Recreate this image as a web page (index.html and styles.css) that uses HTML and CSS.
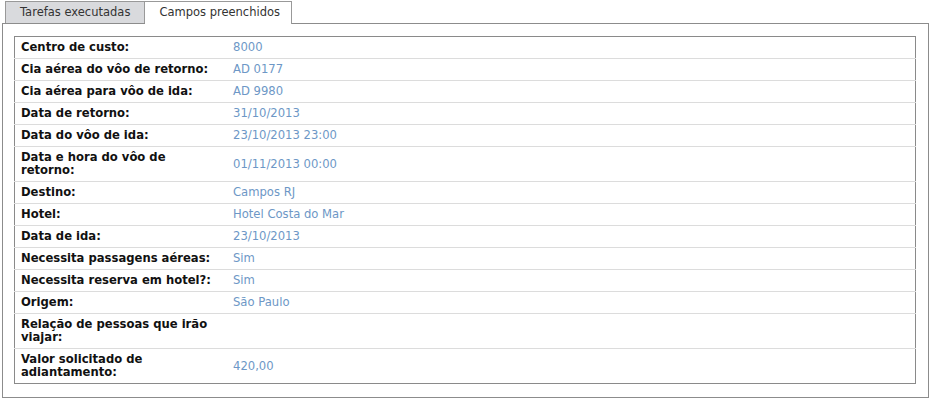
FILE: index.html
```html
<!DOCTYPE html>
<html lang="pt">
<head>
    <meta charset="UTF-8">
    <title>Campos preenchidos</title>
    <link rel="stylesheet" href="styles.css">
</head>
<body>

    <div class="tabs">
        <div class="tab">Tarefas executadas</div>
        <div class="tab active">Campos preenchidos</div>
    </div>

    <div class="panel">
        <table class="fields">
            <tr><th>Centro de custo:</th><td>8000</td></tr>
            <tr><th>Cia aérea do vôo de retorno:</th><td>AD 0177</td></tr>
            <tr><th>Cia aérea para vôo de ida:</th><td>AD 9980</td></tr>
            <tr><th>Data de retorno:</th><td>31/10/2013</td></tr>
            <tr><th>Data do vôo de ida:</th><td>23/10/2013 23:00</td></tr>
            <tr><th>Data e hora do vôo de retorno:</th><td>01/11/2013 00:00</td></tr>
            <tr><th>Destino:</th><td>Campos RJ</td></tr>
            <tr><th>Hotel:</th><td>Hotel Costa do Mar</td></tr>
            <tr><th>Data de ida:</th><td>23/10/2013</td></tr>
            <tr><th>Necessita passagens aéreas:</th><td>Sim</td></tr>
            <tr><th>Necessita reserva em hotel?:</th><td>Sim</td></tr>
            <tr><th>Origem:</th><td>São Paulo</td></tr>
            <tr><th>Relação de pessoas que irão viajar:</th><td></td></tr>
            <tr><th>Valor solicitado de adiantamento:</th><td>420,00</td></tr>
        </table>
    </div>

</body>
</html>
```

FILE: styles.css
```css
body {
    margin: 0;
    padding: 1px 4px 0 2px;
    font-family: "DejaVu Sans", Verdana, sans-serif;
    font-size: 11.6px;
    line-height: 13px;
    color: #111;
    background: #fff;
}
.tabs {
    display: flex;
    margin-left: 3px;
    position: relative;
    z-index: 1;
}
.tab {
    height: 21px;
    line-height: 21px;
    padding: 0 14px;
    border: 1px solid #999;
    border-bottom: none;
    background: #d9dadd;
    color: #333;
    font-size: 11.5px;
}
.tab + .tab {
    border-left: none;
}
.tab.active {
    background: #fff;
    height: 22px;
    margin-bottom: -1px;
    padding-right: 11px;
}
.panel {
    border: 1px solid #8c8c8c;
    padding: 12px 12px 13px 11px;
}
.fields {
    width: 100%;
    border: 1px solid #8a8a8a;
    border-collapse: collapse;
    table-layout: fixed;
}
.fields th {
    width: 196px;
    padding: 4px 10px 4px 6px;
    text-align: left;
    font-weight: bold;
    vertical-align: middle;
}
.fields td {
    padding: 4px 6px;
    color: #6d97c6;
    vertical-align: middle;
}
.fields tr + tr th,
.fields tr + tr td {
    border-top: 1px solid #dcdcdc;
}
```
